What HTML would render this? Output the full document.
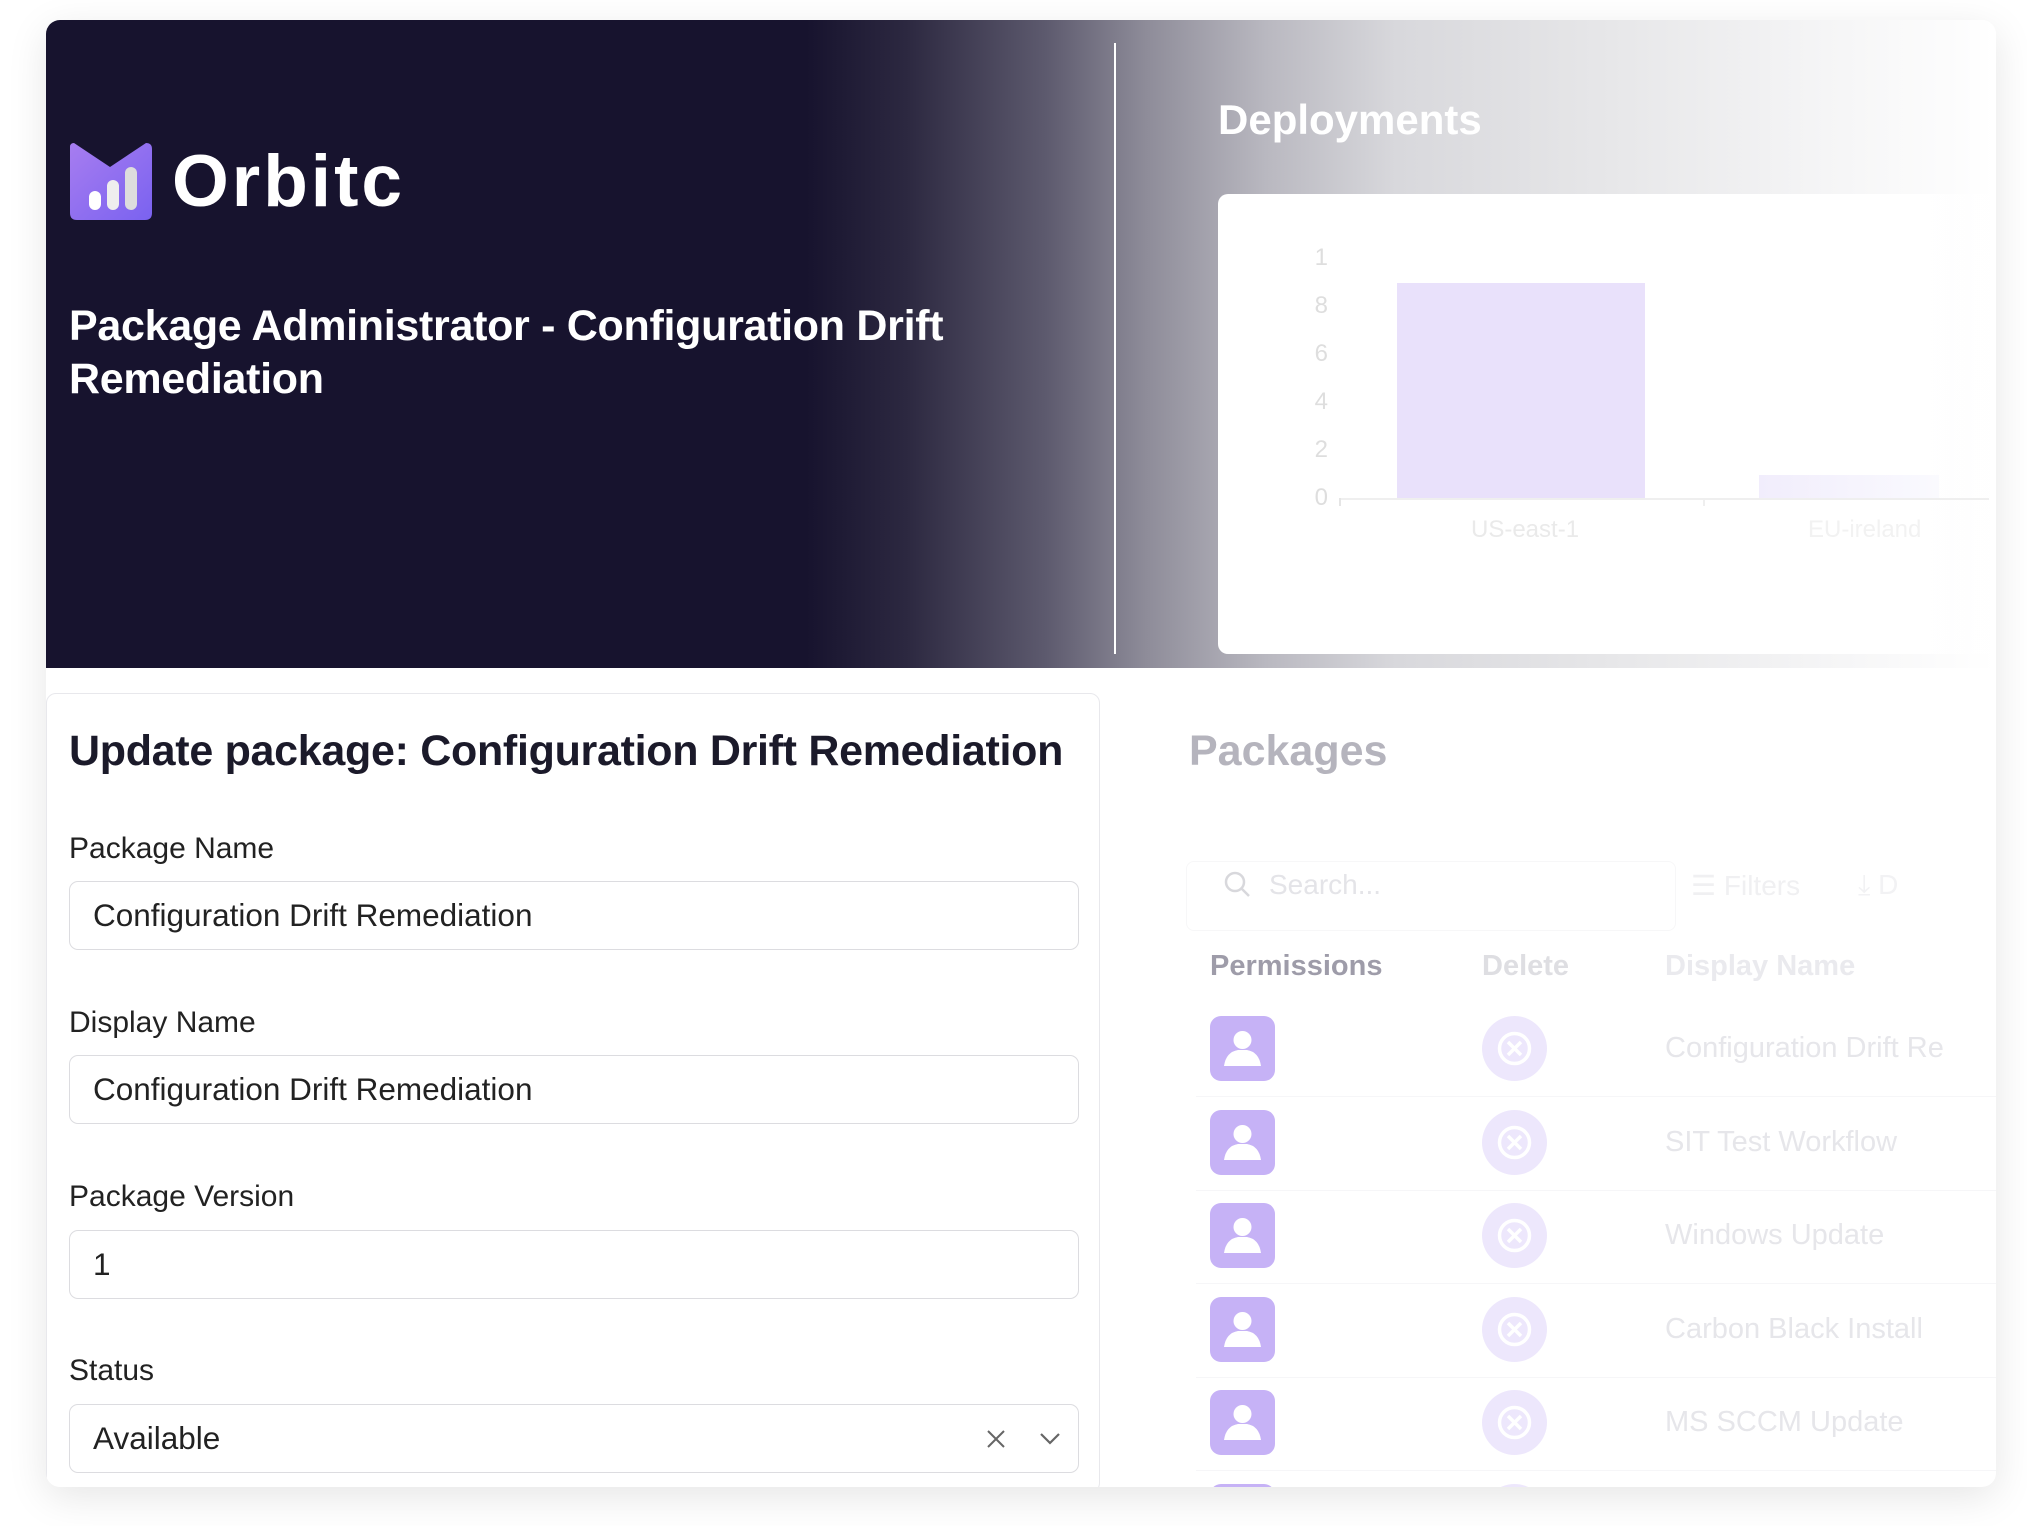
<!DOCTYPE html>
<html><head><meta charset="utf-8"><style>
*{margin:0;padding:0;box-sizing:border-box}
body{width:2027px;height:1526px;background:#fff;position:relative;overflow:hidden;font-family:"Liberation Sans",sans-serif}
.card{position:absolute;left:46px;top:20px;width:1950px;height:1467px;border-radius:14px;background:#fff;box-shadow:0 10px 40px rgba(0,0,0,0.10);overflow:hidden}
.hdr{position:absolute;left:0;top:0;width:1950px;height:648px;background:linear-gradient(to right,#17132e 0,#17132e 760px,#2c2840 860px,#5d5a6e 1000px,#8e8c99 1100px,#b9b8c0 1220px,#d8d8dc 1350px,#e6e6e8 1550px,#f5f5f6 1780px,#fff 1950px)}
.abs{position:absolute}
.lbl{position:absolute;left:23px;font-size:30px;color:#222}
.inp{position:absolute;left:23px;width:1010px;height:69px;border:1.5px solid #dcdce0;border-radius:9px;font-size:31.5px;color:#222;padding-left:23px;line-height:66px}
.perm{position:absolute;left:1164px;width:65px;height:65px;border-radius:11px;background:#c6b2f6}
.del{position:absolute;left:1436px;width:65px;height:65px;border-radius:50%;background:#ede7fc}
.dn{position:absolute;left:1619px;font-size:29px;color:#e6e6ea;white-space:nowrap}
.sep{position:absolute;left:1150px;width:800px;height:1px;background:#f6f6f8}
</style></head><body>
<div class="card">
 <div class="hdr">
  <svg class="abs" style="left:24px;top:123px" width="82" height="78" viewBox="0 0 82 78">
   <defs><linearGradient id="g" x1="0" y1="0" x2="1" y2="1"><stop offset="0" stop-color="#a77df0"/><stop offset="1" stop-color="#7a62f0"/></linearGradient></defs>
   <path d="M4 0 L40 24 L76 0 Q82 0 82 6 L82 70 Q82 77 75 77 L7 77 Q0 77 0 70 L0 4 Q0 0 4 0Z" fill="url(#g)"/>
   <rect x="19" y="48" width="12" height="19" rx="6" fill="#fff"/>
   <rect x="37" y="37" width="12" height="30" rx="6" fill="#eee"/>
   <rect x="55" y="24" width="12" height="43" rx="6" fill="#ddd"/>
  </svg>
  <div class="abs" style="left:126px;top:120px;font-size:73px;font-weight:bold;color:#fff;letter-spacing:3px">Orbitc</div>
  <div class="abs" style="left:23px;top:280px;font-size:43px;font-weight:bold;color:#fff;line-height:53px;letter-spacing:-0.3px">Package Administrator - Configuration Drift<br>Remediation</div>
  <div class="abs" style="left:1068px;top:23px;width:2px;height:611px;background:#fff"></div>
  <div class="abs" style="left:1172px;top:76px;font-size:42px;font-weight:bold;color:#fff">Deployments</div>
  <div class="abs" style="left:1172px;top:174px;width:778px;height:460px;border-radius:10px;background:linear-gradient(to right,#fff,#fff 700px,rgba(255,255,255,0.6))">
   <div class="abs" style="left:90px;top:40px;font-size:24px;color:#dedede;line-height:48px;width:20px;text-align:right">1<br>8<br>6<br>4<br>2<br>0</div>
   <div class="abs" style="left:179px;top:89px;width:248px;height:215px;background:#e9e1fb"></div>
   <div class="abs" style="left:541px;top:281px;width:180px;height:23px;background:linear-gradient(to right,#f1edfc,#fafafe)"></div>
   <div class="abs" style="left:121px;top:304px;width:650px;height:2px;background:#efefef"></div>
   <div class="abs" style="left:121px;top:304px;width:2px;height:8px;background:#e5e5e5"></div>
   <div class="abs" style="left:485px;top:304px;width:2px;height:8px;background:#efefef"></div>
   <div class="abs" style="left:253px;top:322px;font-size:24px;color:#eaeaea">US-east-1</div>
   <div class="abs" style="left:590px;top:322px;font-size:24px;color:#f2f2f2">EU-ireland</div>
  </div>
 </div>
 <div class="abs" style="left:0;top:673px;width:1054px;height:800px;border:1.5px solid #e8e8ec;border-radius:10px;background:#fff">
  <div class="abs" style="left:22px;top:33px;font-size:43px;font-weight:bold;color:#1b1a2a;letter-spacing:-0.3px;white-space:nowrap">Update package: Configuration Drift Remediation</div>
 </div>
 <div class="lbl" style="top:812px">Package Name</div>
 <div class="inp" style="top:861px">Configuration Drift Remediation</div>
 <div class="lbl" style="top:986px">Display Name</div>
 <div class="inp" style="top:1035px">Configuration Drift Remediation</div>
 <div class="lbl" style="top:1160px">Package Version</div>
 <div class="inp" style="top:1210px">1</div>
 <div class="lbl" style="top:1334px">Status</div>
 <div class="inp" style="top:1384px">Available
  <svg class="abs" style="left:915px;top:23px" width="22" height="22" viewBox="0 0 22 22"><path d="M3 3L19 19M19 3L3 19" stroke="#666" stroke-width="2"/></svg>
  <svg class="abs" style="left:968px;top:26px" width="24" height="16" viewBox="0 0 24 16"><path d="M3 3L12 12L21 3" stroke="#666" stroke-width="2.2" fill="none"/></svg>
 </div>
 <div class="abs" style="left:1143px;top:707px;font-size:43px;font-weight:bold;color:#b5b4bd">Packages</div>
 <div class="abs" style="left:1140px;top:841px;width:490px;height:70px;border:1px solid #f7f7f8;border-radius:8px"></div>
 <svg class="abs" style="left:1177px;top:850px" width="30" height="30" viewBox="0 0 30 30"><circle cx="12" cy="12" r="9" stroke="#d8d8dc" stroke-width="2.5" fill="none"/><path d="M19 19L26 26" stroke="#d8d8dc" stroke-width="2.5"/></svg>
 <div class="abs" style="left:1223px;top:849px;font-size:28px;color:#e4e4e8">Search...</div>
 <div class="abs" style="left:1645px;top:849px;font-size:28px;color:#f0f0f2">☰ Filters</div>
 <div class="abs" style="left:1812px;top:849px;font-size:28px;color:#f2f2f4">⤓ D</div>
 <div class="abs" style="left:1164px;top:930px;font-size:29px;font-weight:bold;color:#9e9ca9">Permissions</div>
 <div class="abs" style="left:1436px;top:930px;font-size:29px;font-weight:bold;color:#dedee2">Delete</div>
 <div class="abs" style="left:1619px;top:930px;font-size:29px;font-weight:bold;color:#eaeaee">Display Name</div>
 <div class="sep" style="top:1076px"></div><div class="sep" style="top:1170px"></div><div class="sep" style="top:1263px"></div><div class="sep" style="top:1357px"></div><div class="sep" style="top:1450px"></div>
 <div class="perm" style="top:996px"></div><div class="perm" style="top:1090px"></div><div class="perm" style="top:1183px"></div><div class="perm" style="top:1277px"></div><div class="perm" style="top:1370px"></div><div class="perm" style="top:1464px"></div>
 <div class="del" style="top:996px"></div><div class="del" style="top:1090px"></div><div class="del" style="top:1183px"></div><div class="del" style="top:1277px"></div><div class="del" style="top:1370px"></div><div class="del" style="top:1464px"></div>
 <svg class="abs" style="left:1164px;top:996px" width="65" height="450" viewBox="0 0 65 450" fill="#fff">
  <g><circle cx="32.5" cy="24" r="9"/><path d="M14 50 Q16 36 28 34 L37 34 Q49 36 51 50Z"/></g>
  <g transform="translate(0,94)"><circle cx="32.5" cy="24" r="9"/><path d="M14 50 Q16 36 28 34 L37 34 Q49 36 51 50Z"/></g>
  <g transform="translate(0,187)"><circle cx="32.5" cy="24" r="9"/><path d="M14 50 Q16 36 28 34 L37 34 Q49 36 51 50Z"/></g>
  <g transform="translate(0,281)"><circle cx="32.5" cy="24" r="9"/><path d="M14 50 Q16 36 28 34 L37 34 Q49 36 51 50Z"/></g>
  <g transform="translate(0,374)"><circle cx="32.5" cy="24" r="9"/><path d="M14 50 Q16 36 28 34 L37 34 Q49 36 51 50Z"/></g>
 </svg>
 <svg class="abs" style="left:1436px;top:996px" width="65" height="450" viewBox="0 0 65 450" fill="none" stroke="#fff" stroke-width="3.5">
  <g><circle cx="32.5" cy="32.5" r="15"/><path d="M26 26L39 39M39 26L26 39"/></g>
  <g transform="translate(0,94)"><circle cx="32.5" cy="32.5" r="15"/><path d="M26 26L39 39M39 26L26 39"/></g>
  <g transform="translate(0,187)"><circle cx="32.5" cy="32.5" r="15"/><path d="M26 26L39 39M39 26L26 39"/></g>
  <g transform="translate(0,281)"><circle cx="32.5" cy="32.5" r="15"/><path d="M26 26L39 39M39 26L26 39"/></g>
  <g transform="translate(0,374)"><circle cx="32.5" cy="32.5" r="15"/><path d="M26 26L39 39M39 26L26 39"/></g>
 </svg>
 <div class="dn" style="top:1012px">Configuration Drift Re</div>
 <div class="dn" style="top:1106px">SIT Test Workflow</div>
 <div class="dn" style="top:1199px">Windows Update</div>
 <div class="dn" style="top:1293px">Carbon Black Install</div>
 <div class="dn" style="top:1386px">MS SCCM Update</div>
</div>
</body></html>
